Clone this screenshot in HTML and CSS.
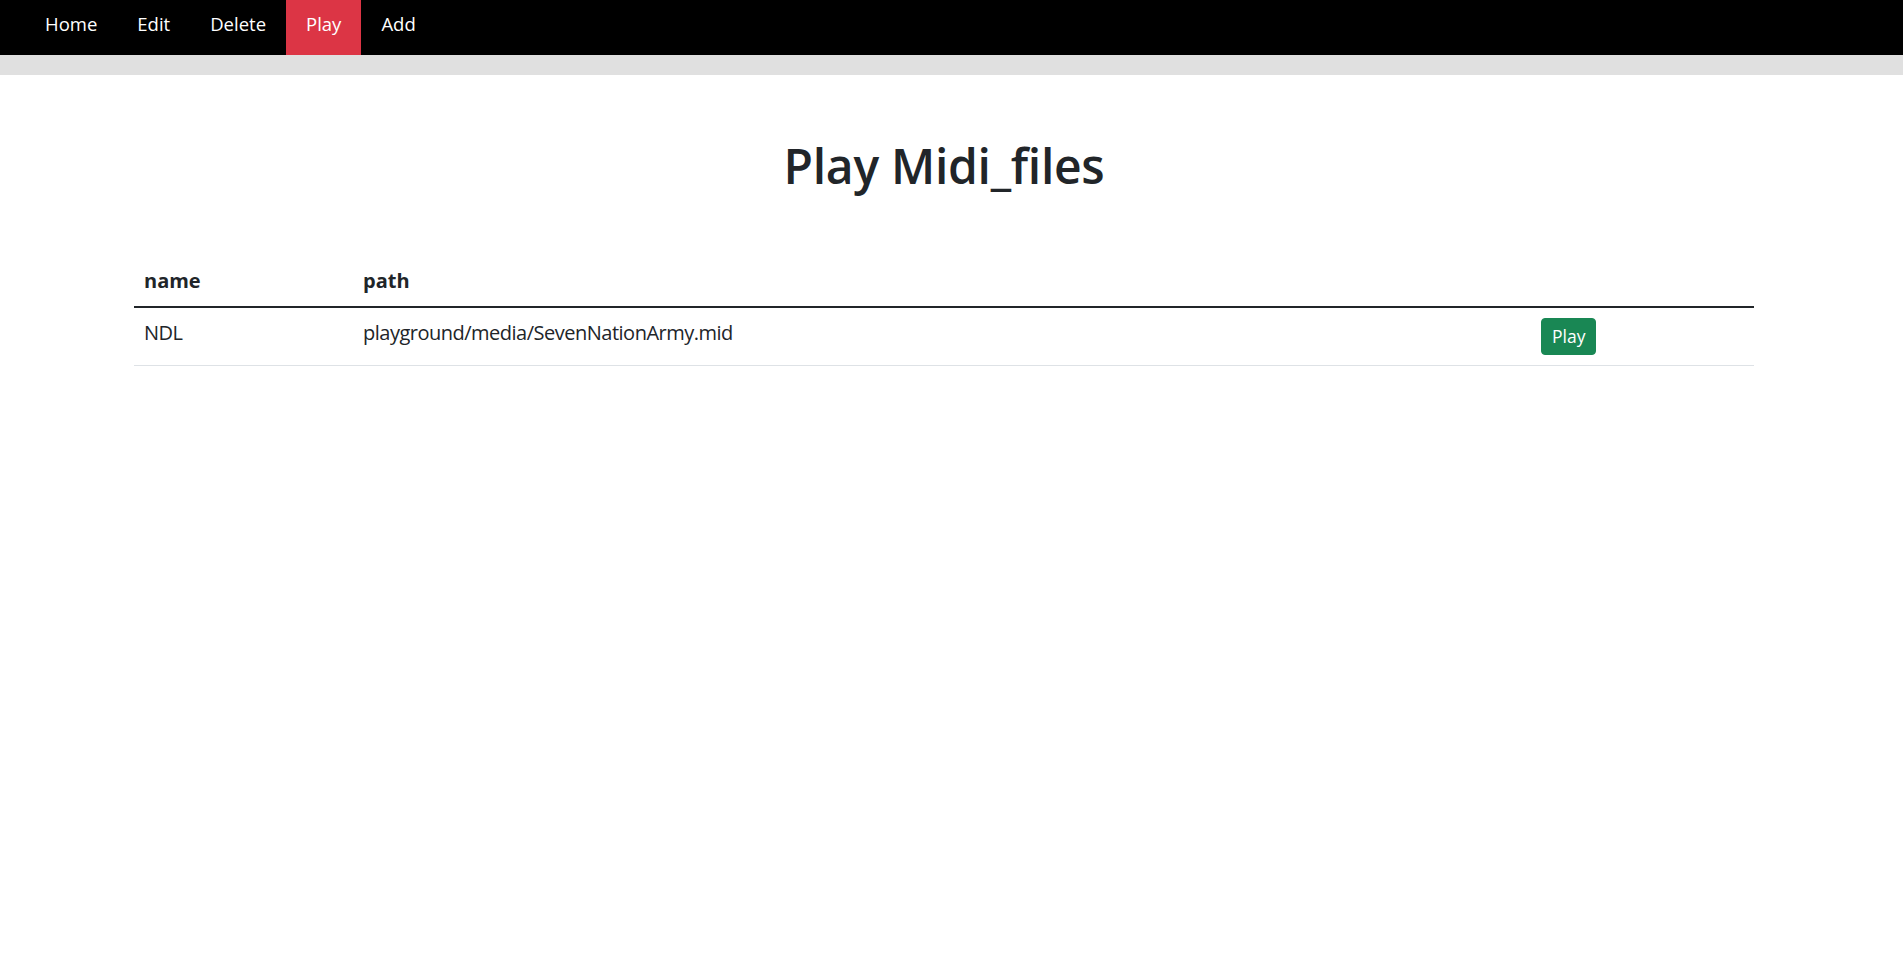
FILE: index.html
```html
<!DOCTYPE html>
<html lang="en">
<head>
<meta charset="utf-8">
<title>Play Midi_files</title>
<link rel="stylesheet" href="styles.css">
</head>
<body>
<nav class="topnav">
  <a class="nav-link" href="#">Home</a>
  <a class="nav-link" href="#">Edit</a>
  <a class="nav-link" href="#">Delete</a>
  <a class="nav-link active" href="#">Play</a>
  <a class="nav-link" href="#">Add</a>
</nav>
<div class="subbar"></div>
<main class="page">
  <div class="container">
    <h1 class="title">Play Midi_files</h1>
    <table class="table">
      <thead>
        <tr>
          <th class="col-name">name</th>
          <th class="col-path">path</th>
          <th class="col-action"></th>
        </tr>
      </thead>
      <tbody>
        <tr>
          <td>NDL</td>
          <td>playground/media/SevenNationArmy.mid</td>
          <td><button class="btn btn-success" type="button">Play</button></td>
        </tr>
      </tbody>
    </table>
  </div>
</main>
</body>
</html>
```

FILE: styles.css
```css
* { box-sizing: border-box; }

body {
  margin: 0;
  font-family: "Open Sans", "Noto Sans", "Liberation Sans", sans-serif;
  font-size: 20px;
  line-height: 1.5;
  color: #212529;
  background: #fff;
}

.topnav {
  display: flex;
  background: #000;
  height: 55px;
  padding-left: 25px;
}

.nav-link {
  display: block;
  color: #fff;
  text-decoration: none;
  font-size: 18.5px;
  line-height: 25px;
  padding: 11px 20px 19px;
}

.nav-link.active {
  background: #dc3545;
}

.subbar {
  height: 20px;
  background: #e0e0e0;
}

.page {
  padding-right: 15px;
}

.container {
  max-width: 1650px;
  margin: 0 auto;
  padding: 0 15px;
}

.title {
  margin: 61px 0 60px;
  font-size: 48px;
  font-weight: 600;
  letter-spacing: -0.3px;
  line-height: 1.25;
  text-align: center;
}

.table {
  width: 100%;
  border-collapse: collapse;
  vertical-align: top;
}

.table th,
.table td {
  padding: 10px;
  text-align: left;
  vertical-align: top;
}

.table th {
  font-weight: 700;
  border-bottom: 2.5px solid #212529;
}

.table td {
  border-bottom: 1.25px solid #dee2e6;
  letter-spacing: -0.5px;
}

.col-name { width: 219px; }
.col-action { width: 223px; }

.btn {
  display: inline-block;
  font-family: inherit;
  font-size: 17.5px;
  line-height: 25px;
  padding: 5px 10px;
  border-radius: 4px;
  letter-spacing: 0;
  cursor: pointer;
}

.btn-success {
  color: #fff;
  background: #198754;
  border: 1.25px solid #198754;
}
```
